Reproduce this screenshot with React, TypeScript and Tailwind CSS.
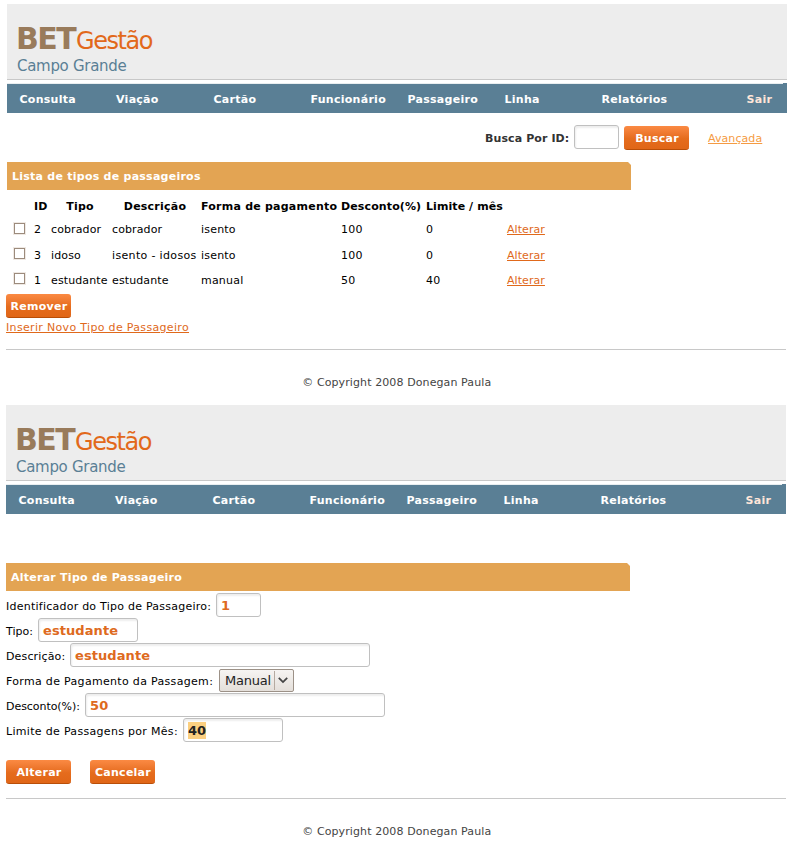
import React from "react";

const NAV = [
  { label: "Consulta", width: "w-[96.5px]" },
  { label: "Viação", width: "w-[97.5px]" },
  { label: "Cartão", width: "w-[97px]" },
  { label: "Funcionário", width: "w-[97px]" },
  { label: "Passageiro", width: "w-[97px]" },
  { label: "Linha", width: "w-[97px]" },
  { label: "Relatórios", width: "w-[145px]" },
];

const ROWS = [
  { id: "2", tipo: "cobrador", desc: "cobrador", forma: "isento", desconto: "100", limite: "0", leading: "leading-[25px]" },
  { id: "3", tipo: "idoso", desc: "isento - idosos", forma: "isento", desconto: "100", limite: "0", leading: "leading-[27px]" },
  { id: "1", tipo: "estudante", desc: "estudante", forma: "manual", desconto: "50", limite: "40", leading: "leading-[27px]" },
];

const COLS = "grid grid-cols-[17px_61px_89px_140px_85px_81px_60px]";

function Header() {
  return (
    <header className="w-[780px]">
      <div className="h-[76px] border-b border-[#c8c8c8] bg-[#ededed] pl-[9px] pt-[17px]">
        <div className="flex h-[36px] items-baseline leading-[36px]">
          <span className="w-[60px] text-[30px] font-bold tracking-[-1.6px] text-[#997b5b]">BET</span>
          <span className="text-[24px] tracking-[-1.45px] text-[#e2691b]">Gestão</span>
        </div>
        <div className="h-[18px] pl-px text-[15px] leading-[18px] tracking-[-0.3px] text-[#5a7f95]">Campo Grande</div>
      </div>
      <div className="flex h-[4px] items-end justify-between pt-[3px]">
        <div className="h-px w-[776px] bg-[#e9eef0]" />
        <div className="h-px w-[4px] bg-[#5a7f95]" />
      </div>
      <nav className="flex h-[29px] bg-[#5a7f95] pl-[12.5px] text-[11px] font-bold leading-[31px] tracking-[0.27px] text-white">
        {NAV.map((n) => (
          <a key={n.label} className={n.width}>{n.label}</a>
        ))}
        <a className="text-[#ffe6d9]">Sair</a>
      </nav>
    </header>
  );
}

function TitleBar({ children }: { children: React.ReactNode }) {
  return (
    <h2 className="h-[28px] w-[624px] bg-[#e3a453] pl-[5px] text-[11px] font-bold leading-[30px] tracking-[0.25px] text-white [clip-path:polygon(0_0,621px_0,624px_3px,624px_28px,0_28px)]">
      {children}
    </h2>
  );
}

function Button({ children }: { children: React.ReactNode }) {
  return (
    <button className="block h-[24px] w-[65px] shrink-0 whitespace-nowrap rounded-[3px] border-b border-[#b94e08] bg-linear-to-b from-[#fb8a43] via-[#e56c1d] via-55% to-[#e06617] pl-px text-center text-[11px] font-bold leading-[25px] tracking-[0.25px] text-white">
      {children}
    </button>
  );
}

function Input({ width, value, selected }: { width: string; value?: string; selected?: boolean }) {
  return (
    <div className={`${width} h-[24px] shrink-0 rounded-[3px] border border-[#c0c0c0] bg-white pl-[4px] text-[13px] font-bold leading-[24px] tracking-[0.08px] text-[#de6a20] shadow-[inset_1px_2px_2px_#eeeeee]`}>
      {selected ? <span className="mt-[3px] block h-[17px] w-[18px] bg-[#fbcf80] leading-[18px] tracking-[-0.1px] text-[#222]">{value}</span> : value}
    </div>
  );
}

function Field({
  label,
  labelWidth,
  tracking,
  children,
}: {
  label: string;
  labelWidth: string;
  tracking: string;
  children: React.ReactNode;
}) {
  return (
    <div className="flex h-[25px]">
      <label className={`${labelWidth} ${tracking} shrink-0 whitespace-nowrap leading-[28px]`}>{label}</label>
      {children}
    </div>
  );
}

function Footer() {
  return (
    <footer className="w-[780px] border-t border-[#c8c8c8] pt-[26px] pl-[1.5px] text-center tracking-[0.1px] text-[#444]">
      © Copyright 2008 Donegan Paula
    </footer>
  );
}

export default function App() {
  return (
    <div className="h-[847px] w-[792px] overflow-hidden bg-white pl-[6px] font-['DejaVu_Sans',sans-serif] text-[11px] leading-[14px] tracking-[0.2px] text-black">
      <section className="h-[405px] pt-[4px]">
        <div className="pl-px">
          <Header />
          <div className="flex h-[49px] pl-[478px] pt-[12px]">
            <span className="w-[89px] whitespace-nowrap font-bold leading-[28px] tracking-[0.1px] text-[#333]">Busca Por ID:</span>
            <Input width="w-[45px]" />
            <div className="pl-[5px] pt-px">
              <Button>Buscar</Button>
            </div>
            <a className="pl-[19px] leading-[28px] tracking-[0.08px] text-[#f59b43] underline">Avançada</a>
          </div>
          <TitleBar>Lista de tipos de passageiros</TitleBar>
          <div className="h-[104px] pl-[27px]">
            <div className={`${COLS} h-[27px] whitespace-nowrap text-center font-bold leading-[34px] tracking-[0.23px]`}>
              <span className="text-left">ID</span>
              <span className="pr-[3px]">Tipo</span>
              <span className="pr-[3px]">Descrição</span>
              <span className="text-left">Forma de pagamento</span>
              <span className="text-left tracking-[0.12px]">Desconto(%)</span>
              <span className="text-left tracking-[0.08px]">Limite / mês</span>
            </div>
            {ROWS.map((r) => (
              <div key={r.id} className="-ml-[21px] flex h-[25px]">
                <span className="mt-[5px] mr-[8px] h-[13px] w-[13px] shrink-0 border border-[#efe9e4] p-0">
                  <span className="block h-[11px] w-[11px] border border-[#9c8b7c] bg-white" />
                </span>
                <div className={`${COLS} ${r.leading} whitespace-nowrap`}>
                  <span>{r.id}</span>
                  <span className="tracking-[0.12px]">{r.tipo}</span>
                  <span className={r.id === "3" ? "tracking-[0.34px]" : "tracking-[0.12px]"}>{r.desc}</span>
                  <span>{r.forma}</span>
                  <span>{r.desconto}</span>
                  <span>{r.limite}</span>
                  <a className="justify-self-start tracking-[0.07px] text-[#e0691b] underline">Alterar</a>
                </div>
              </div>
            ))}
          </div>
        </div>
        <Button>Remover</Button>
        <a className="mt-[3px] mb-[14px] block tracking-[0.33px] text-[#e0691b] underline">Inserir Novo Tipo de Passageiro</a>
        <Footer />
      </section>

      <section>
        <Header />
        <div className="pt-[49px]">
          <TitleBar>Alterar Tipo de Passageiro</TitleBar>
        </div>
        <div className="pt-[2px]">
          <Field label="Identificador do Tipo de Passageiro:" labelWidth="w-[210px]" tracking="tracking-[0.24px]">
            <Input width="w-[45px]" value="1" />
          </Field>
          <Field label="Tipo:" labelWidth="w-[32px]" tracking="tracking-[0.05px]">
            <Input width="w-[100px]" value="estudante" />
          </Field>
          <Field label="Descrição:" labelWidth="w-[64px]" tracking="tracking-[0.15px]">
            <Input width="w-[300px]" value="estudante" />
          </Field>
          <Field label="Forma de Pagamento da Passagem:" labelWidth="w-[213px]" tracking="tracking-[0.32px]">
            <div className="mt-px flex h-[23px] w-[75px] items-center rounded-[2px] border border-[#9c9187] bg-linear-to-b from-[#f6f4f2] to-[#e4dfda] pl-[5px] text-[13px] tracking-[-0.25px] text-[#222]">
              <span className="w-[49px]">Manual</span>
              <span className="h-[19px] w-px bg-[#b5aaa0]" />
              <svg className="ml-[3px]" width="10" height="7" viewBox="0 0 10 7" fill="none" stroke="#444" strokeWidth="1.8">
                <path d="M0.8 0.9 L5 5.1 L9.2 0.9" />
              </svg>
            </div>
          </Field>
          <Field label="Desconto(%):" labelWidth="w-[79px]" tracking="tracking-[-0.05px]">
            <Input width="w-[300px]" value="50" />
          </Field>
          <Field label="Limite de Passagens por Mês:" labelWidth="w-[177px]" tracking="tracking-[0.31px]">
            <Input width="w-[100px]" value="40" selected />
          </Field>
        </div>
        <div className="mb-[14px] flex gap-[19px] pt-[17px]">
          <Button>Alterar</Button>
          <Button>Cancelar</Button>
        </div>
        <Footer />
      </section>
    </div>
  );
}
